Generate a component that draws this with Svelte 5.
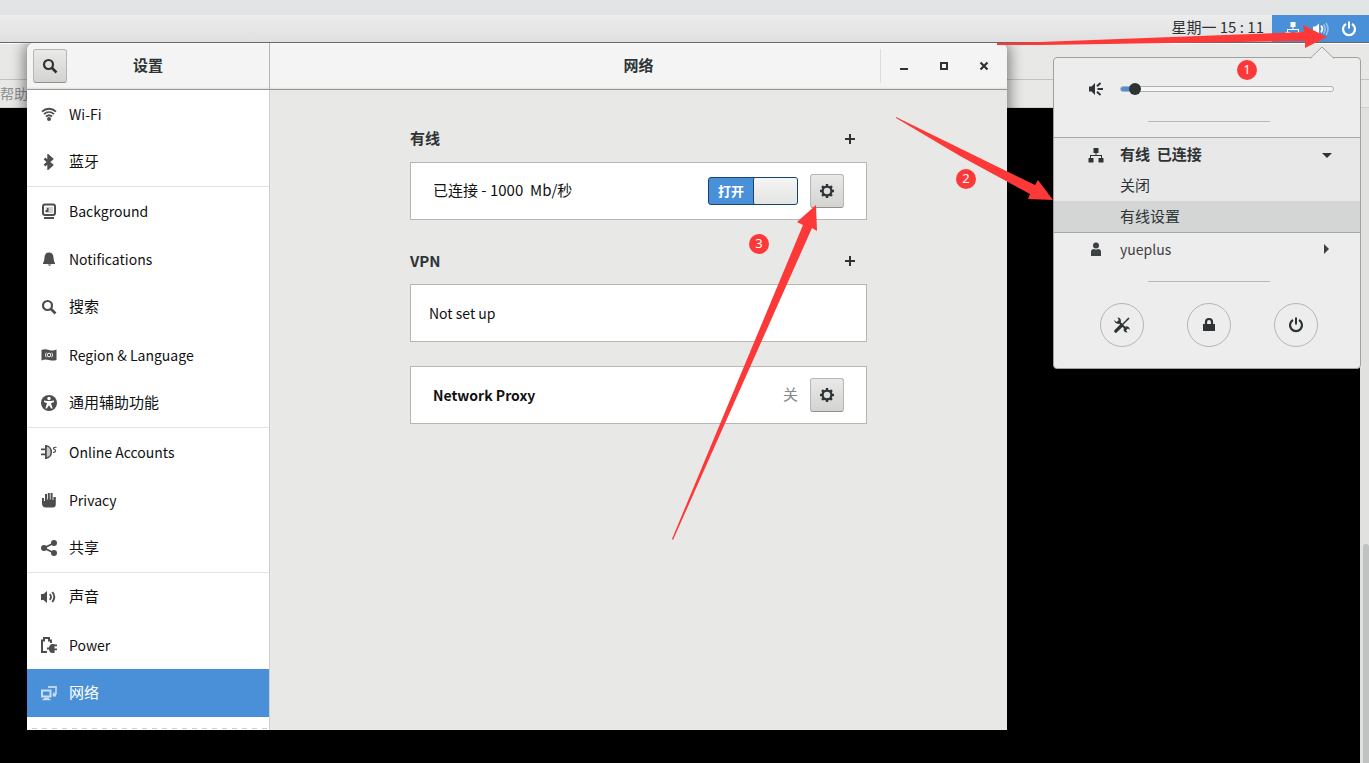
<script>
  const groups = [
    [
      { icon: 'wifi', label: 'Wi-Fi' },
      { icon: 'bluetooth', label: '蓝牙', zh: true }
    ],
    [
      { icon: 'background', label: 'Background' },
      { icon: 'bell', label: 'Notifications' },
      { icon: 'search', label: '搜索', zh: true },
      { icon: 'flag', label: 'Region & Language' },
      { icon: 'access', label: '通用辅助功能', zh: true }
    ],
    [
      { icon: 'online', label: 'Online Accounts' },
      { icon: 'hand', label: 'Privacy' },
      { icon: 'share', label: '共享', zh: true }
    ],
    [
      { icon: 'sound', label: '声音', zh: true },
      { icon: 'power', label: 'Power' },
      { icon: 'network', label: '网络', zh: true }
    ]
  ];

  let selected = $state('network');
  let wiredOn = $state(true);
  let volume = $state(4);

  const marks = [
    { n: 1, x: 1247, y: 70, arrow: '997,43 1040,42 1304,32 1303,25 1327,37 1305,48 1305,41 1040,45 997,45' },
    { n: 2, x: 966, y: 179, arrow: '896,117 1035,185 1038,180 1053,200 1028,199 1030,194 960,156 896,118' },
    { n: 3, x: 759, y: 244, arrow: '672,539 803,225 797,222 816,205 817,231 812,228 673,540' }
  ];
</script>

{#snippet icon(name)}
  <svg class="icon" viewBox="0 0 16 16" aria-hidden="true">
    {#if name === 'wifi'}
      <g fill="none" stroke="currentColor" stroke-width="1.8">
        <path d="M1 5.600C5 1.800 11 1.800 15 5.600" />
        <path d="M3 8.200C6 5.400 10 5.400 13 8.200" />
        <path d="M5 10.500C7 8.800 9 8.800 11 10.500" />
      </g>
      <circle cx="8" cy="13" r="2" fill="currentColor" />
    {:else if name === 'bluetooth'}
      <path d="M3.500 4.500 11 11 7.500 14.200V1.800L11 5 3.500 11.500" fill="none" stroke="currentColor" stroke-width="2.400" />
    {:else if name === 'background'}
      <rect x="2" y="1.500" width="12" height="10.500" rx="2" fill="none" stroke="currentColor" stroke-width="2" />
      <path d="M4.500 4h7.500v6H4.500z" fill="currentColor" opacity=".25" />
      <path d="M4.500 9V7h1.500V5h1.500v4z" fill="currentColor" />
      <path d="M3 14h10v2H3z" fill="currentColor" />
    {:else if name === 'bell'}
      <path d="M8 1.500c3.500 0 4.300 2.500 4.500 5 .2 3 .8 4.500 1.500 5.500v1H2v-1c.7-1 1.300-2.500 1.500-5.500.2-2.500 1-5 4.500-5zM6.500 13.500h4l-2 1.500z" fill="currentColor" />
    {:else if name === 'search'}
      <circle cx="6.500" cy="6.500" r="4.500" fill="none" stroke="currentColor" stroke-width="2.200" />
      <path d="m9.500 9.500 5 5" stroke="currentColor" stroke-width="2.600" />
    {:else if name === 'flag'}
      <path d="M.500 3Q4 1.600 8 3t7.500-.500v10.500q-3.500 1.200-7.500 0t-7.500.500z" fill="currentColor" />
      <circle cx="8" cy="8" r="1.800" fill="none" stroke="#fff" />
      <path d="M5.300 5.500Q3.300 8 5.300 10.500M10.700 5.500q2 2.500 0 5" fill="none" stroke="#fff" stroke-width=".8" />
    {:else if name === 'access'}
      <circle cx="8" cy="8" r="8" fill="currentColor" />
      <circle cx="8" cy="3.500" r="1.700" fill="#fff" />
      <path d="M3 5.500 6.500 6h3L13 5.500v1.500L10 8.300l1.700 5.200h-1.500L8 10.200 5.800 13.500H4.300L6 8.300 3 7z" fill="#fff" />
    {:else if name === 'online'}
      <path d="M0 4.500h4v1.800H0zM0 9.500h4v1.800H0zM4 1h1.800v14H4z" fill="currentColor" />
      <path d="M5 2c7 0 7 12 0 12" fill="currentColor" fill-opacity=".3" stroke="currentColor" stroke-width="1.600" />
      <path d="M15.500 3.500c-3-1-4 1.500-2 2s1 3.500-1.500 2.800" fill="none" stroke="currentColor" stroke-width="1.200" />
    {:else if name === 'hand'}
      <path d="M1 6h2v3h1V2h2v5.500h.8V1h2v6.500h.8V1h2v7h.8V5h2.400v7q0 3.500-3 3.500H5Q1 15.500 1 11.500z" fill="currentColor" />
    {:else if name === 'share'}
      <path d="M13 3 3 8l10 5" fill="none" stroke="currentColor" stroke-width="1.800" />
      <g fill="currentColor"><circle cx="13" cy="3" r="3" /><circle cx="3" cy="8" r="3" /><circle cx="13" cy="13" r="3" /></g>
    {:else if name === 'sound'}
      <path d="M0 5h2.500L6 2v12l-3.500-3H0z" fill="currentColor" />
      <path d="M8.800 5.200q2.400 2.800 0 5.600" fill="none" stroke="currentColor" stroke-width="1.800" />
      <path d="M11.300 3q4 5 0 10" fill="none" stroke="currentColor" stroke-width="1.900" />
    {:else if name === 'power'}
      <path d="M6 15H1V3.500h2V1h5v2.500h2V6" fill="none" stroke="currentColor" stroke-width="2" />
      <path d="M16 7.500v1.800h-2.500v2.200H16v1.800h-2.500V16h-2q-3 0-3.500-3.500H6v-2h2Q8.500 7 11.500 7h2v.500z" fill="currentColor" />
    {:else if name === 'network'}
      <path d="M7 2h8v6.500h-3" fill="none" stroke="currentColor" stroke-width="1.800" opacity=".85" />
      <path d="M11.500 9h3.500v2.500h-3z" fill="currentColor" />
      <path d="M1 5.500h8.500v6H1z" fill="none" stroke="currentColor" stroke-width="2" />
      <path d="M3 12.500h5V14h1.500v1.200H1.500V14H3z" fill="currentColor" />
    {:else if name === 'gear'}
      <circle cx="8" cy="8" r="4.400" fill="none" stroke="currentColor" stroke-width="2.300" />
      <g fill="currentColor">
        {#each [0, 45, 90, 135, 180, 225, 270, 315] as a}
          <path d="M6.800 1h2.400v3H6.800z" transform="rotate({a} 8 8)" />
        {/each}
      </g>
    {:else if name === 'plus'}
      <path d="M7 3h2v4h4v2H9v4H7V9H3V7h4z" fill="currentColor" />
    {:else if name === 'minimize'}
      <path d="M4 10h8v2H4z" fill="currentColor" />
    {:else if name === 'maximize'}
      <path d="M5 5h6v6H5z" fill="none" stroke="currentColor" stroke-width="2" />
    {:else if name === 'close'}
      <path d="m4.500 4.500 7 7m0-7-7 7" stroke="currentColor" stroke-width="2.200" />
    {:else if name === 'wired'}
      <path d="M5.500 1h5v5h-2v2H14v3h1.500v4.500h-5V11H13V9H3v2h2.500v4.500h-5V11H2V8h5.500V6h-2z" fill="currentColor" />
    {:else if name === 'speaker'}
      <path d="M0 5.500h2.500L6 2.500v11l-3.500-3H0z" fill="currentColor" />
      <path d="M8 4.700q2.800 3 0 6.600" fill="none" stroke="currentColor" stroke-width="1.900" />
      <path d="M10.700 3.500q3 4.500 0 9M13 2q4 6 0 12" fill="none" stroke="currentColor" stroke-width="1.500" opacity=".45" />
    {:else if name === 'volume'}
      <path d="M1 5.500h2.500L7 2v12l-3.500-3.500H1z" fill="currentColor" />
      <path d="M9 5.300 12.500 2M9.500 8H15M9 10.700l3.500 3.300" stroke="currentColor" stroke-width="1.900" />
    {:else if name === 'shutdown'}
      <path d="M5 3a6 6 0 1 0 6 0" fill="none" stroke="currentColor" stroke-width="2.200" />
      <path d="M7 .500h2v7H7z" fill="currentColor" />
    {:else if name === 'user'}
      <circle cx="8" cy="4.500" r="3" fill="currentColor" />
      <path d="M3 15v-4q0-3 3-3 2 1 4 0 3 0 3 3v4z" fill="currentColor" />
    {:else if name === 'lock'}
      <path d="M2 7h12v7H2z" fill="currentColor" />
      <path d="M5 8V5q0-3 3-3t3 3v3" fill="none" stroke="currentColor" stroke-width="2.200" />
    {:else if name === 'tools'}
      <path d="M13.500 2.500 8 8" stroke="currentColor" stroke-width="1.500" />
      <path d="M12.500 2.200 14.500.500l1 1-1.700 2z" fill="currentColor" />
      <path d="M7.500 8.500 1.800 14.200" stroke="currentColor" stroke-width="3.200" stroke-linecap="round" />
      <path d="m4 4 8.500 8.500" stroke="currentColor" stroke-width="2" />
      <path d="M3.500.500q3.500 0 3.500 4L4.500 7Q.500 6.500.200 3L2.500 5 5 3.500zM12 9.200q3.500.200 4 3.800l-2-1.500-2 1.500 1.500 2.500Q9.500 15.500 9.500 12z" fill="currentColor" />
    {:else if name === 'down'}
      <path d="M3 6h10L8 11z" fill="currentColor" />
    {:else if name === 'right'}
      <path d="M5 3 10 8l-5 5z" fill="currentColor" />
    {/if}
  </svg>
{/snippet}

<div class="desktop">
  <div class="strip"></div>
  <header class="panel">
    <time lang="zh">星期一 15 : 11</time>
    <button class="tray" aria-label="System menu">
      {@render icon('wired')}
      {@render icon('speaker')}
      {@render icon('shutdown')}
    </button>
  </header>

  <div class="stage">
    <div class="terminal">
      <div class="term-title"></div>
      <div class="term-menu">帮助</div>
      <div class="term-screen"><div class="term-scroll"></div></div>
    </div>

    <main class="window">
      <div class="head side-head">
        <button class="btn" aria-label="Search">{@render icon('search')}</button>
        <h1 lang="zh">设置</h1>
      </div>
      <div class="head main-head">
        <h1 lang="zh">网络</h1>
        <div class="controls">
          <button aria-label="Minimize">{@render icon('minimize')}</button>
          <button aria-label="Maximize">{@render icon('maximize')}</button>
          <button aria-label="Close">{@render icon('close')}</button>
        </div>
      </div>

      <nav>
        {#each groups as group}
          <div class="group">
            {#each group as item}
              <button class="item" class:selected={selected === item.icon} onclick={() => (selected = item.icon)}>
                {@render icon(item.icon)}<span lang={item.zh ? 'zh' : 'en'}>{item.label}</span>
              </button>
            {/each}
          </div>
        {/each}
        <div class="undershoot"></div>
      </nav>

      <section class="content">
        <div class="column">
          <div class="label"><h2 lang="zh">有线</h2><button aria-label="Add wired">{@render icon('plus')}</button></div>
          <div class="card">
            <span class="grow" id="wired-state" lang="zh">已连接 - 1000  Mb/秒</span>
            <label class="switch" class:off={!wiredOn}>
              <input type="checkbox" role="switch" aria-labelledby="wired-state" bind:checked={wiredOn} />
              <span class="on">{wiredOn ? '打开' : ''}</span><span class="knob"></span>
            </label>
            <button class="btn" aria-label="Wired options">{@render icon('gear')}</button>
          </div>
          <div class="label"><h2>VPN</h2><button aria-label="Add VPN">{@render icon('plus')}</button></div>
          <div class="card plain">Not set up</div>
          <div class="card proxy">
            <strong class="grow">Network Proxy</strong>
            <span class="dim" lang="zh">关</span>
            <button class="btn" aria-label="Proxy options">{@render icon('gear')}</button>
          </div>
        </div>
      </section>
    </main>
  </div>

  <aside class="menu">
    <svg class="pointer" viewBox="0 0 26 13" aria-hidden="true"><path d="M1 12.500 13 1l12 11.500" fill="#ededed" stroke="#a1a1a1" /></svg>
    <div class="volume">
      {@render icon('volume')}
      <input type="range" min="0" max="100" aria-label="Volume" style="--fill: {volume + 3}%" bind:value={volume} />
    </div>
    <div class="rule"></div>
    <div class="wired">
      <button class="row bold">{@render icon('wired')}<span lang="zh">有线  已连接</span>{@render icon('down')}</button>
      <button class="row"><span lang="zh">关闭</span></button>
      <button class="row active"><span lang="zh">有线设置</span></button>
    </div>
    <button class="row user">{@render icon('user')}<span>yueplus</span>{@render icon('right')}</button>
    <div class="rule"></div>
    <div class="actions">
      <button aria-label="Settings">{@render icon('tools')}</button>
      <button aria-label="Lock">{@render icon('lock')}</button>
      <button aria-label="Power off">{@render icon('shutdown')}</button>
    </div>
  </aside>

  <svg class="notes" viewBox="0 0 1369 763">
    {#each marks as m}
      <polygon points={m.arrow} />
      <circle cx={m.x} cy={m.y} r="10" />
      <text x={m.x} y={m.y + 4}>{m.n}</text>
    {/each}
  </svg>
</div>

<style>
  :global(body) {
    margin: 0;
    background: #000;
  }
  .desktop {
    position: relative;
    display: flex;
    flex-direction: column;
    min-height: 100vh;
    overflow: hidden;
    font: 14px/24px 'Noto Sans CJK SC', 'Noto Sans', sans-serif;
    color: #2e3436;
  }
  .desktop * {
    box-sizing: border-box;
  }
  button {
    display: flex;
    align-items: center;
    justify-content: center;
    padding: 0;
    border: 0;
    background: none;
    color: inherit;
    font: inherit;
    text-align: left;
  }
  h1,
  h2 {
    margin: 0;
    font-size: 15px;
    font-weight: 700;
  }
  [lang='zh'] {
    padding-bottom: 2px;
    font-size: 15px;
  }
  .icon {
    display: block;
    flex: none;
    width: 16px;
    height: 16px;
  }
  .strip {
    height: 15px;
    background: #e2e4e6;
  }
  .panel {
    position: relative;
    z-index: 1;
    display: flex;
    justify-content: flex-end;
    align-items: stretch;
    gap: 8px;
    height: 28px;
    border-bottom: 1px solid #65686a;
    background: linear-gradient(#ececec, #e0e0e0);
  }
  .tray {
    gap: 12px;
    width: 97px;
    background: #4a90d9;
    color: #fff;
  }
  .stage {
    position: relative;
    flex: 1;
    padding: 0 362px 33px 27px;
  }
  .terminal {
    position: absolute;
    inset: 0;
    display: flex;
    flex-direction: column;
  }
  .term-title {
    height: 37px;
    border-top: 1px solid #fff;
    border-bottom: 1px solid #c2c2c0;
    background: #e8e8e7;
  }
  .term-menu {
    height: 28px;
    border-bottom: 1px solid #d0d0ce;
    background: #e8e8e7;
    color: #8b8e8f;
    line-height: 26px;
  }
  .term-screen {
    flex: 1;
    padding-top: 436px;
    border-right: 9px solid #e1e1df;
    background: #000;
  }
  .term-scroll {
    position: relative;
    width: 6px;
    height: 100%;
    margin-left: auto;
    margin-right: -9px;
    border-radius: 3px 3px 0 0;
    background: #c0c2c2;
  }
  .window {
    position: relative;
    display: grid;
    grid-template-columns: 243px 1fr;
    grid-template-rows: 47px auto;
    border-radius: 7px 7px 0 0;
    overflow: hidden;
    background: #e8e8e7;
    box-shadow: 0 2px 14px 3px rgba(0, 0, 0, 0.45);
  }
  .head {
    position: relative;
    display: flex;
    align-items: center;
    justify-content: center;
    border-bottom: 1px solid #969693;
    background: linear-gradient(#fff 0, #f4f4f4 1px, #f4f4f4 44px, #dededd 46px);
  }
  .side-head {
    border-right: 1px solid #b5b5b2;
  }
  .side-head .btn {
    position: absolute;
    left: 6px;
  }
  .controls {
    position: absolute;
    right: 0;
    display: flex;
    padding: 0 3px;
    border-left: 1px solid #dcdcda;
  }
  .controls button {
    width: 40px;
    height: 34px;
  }
  .btn {
    flex: none;
    width: 34px;
    height: 34px;
    border: 1px solid #b6b6b3;
    border-bottom-color: #91918c;
    border-radius: 3px;
    background: linear-gradient(#e9e9e8, #d3d3d1);
  }
  nav {
    display: flex;
    flex-direction: column;
    border-right: 1px solid #cececc;
    background: #fff;
    color: #111;
  }
  .group + .group {
    border-top: 1px solid #e2e2e1;
  }
  .item {
    justify-content: flex-start;
    gap: 12px;
    width: 100%;
    height: 48px;
    padding: 0 14px;
  }
  .item .icon {
    color: #4d4d4d;
  }
  .item.selected {
    background: #4a90d9;
    color: #fff;
  }
  .item.selected .icon {
    color: #c9def4;
  }
  .undershoot {
    height: 13px;
    padding-top: 11px;
  }
  .undershoot::before {
    content: '';
    display: block;
    height: 1px;
    background: repeating-linear-gradient(90deg, #fff 0 5px, #cdcdcd 5px 10px);
  }
  .content {
    padding: 37px 24px;
  }
  .column {
    max-width: 457px;
    margin: 0 auto;
  }
  .label {
    display: flex;
    align-items: center;
    justify-content: space-between;
    height: 24px;
    margin-bottom: 11px;
    padding-right: 9px;
  }
  .card {
    display: flex;
    align-items: center;
    height: 58px;
    padding: 0 22px;
    border: 1px solid #b6b6b3;
    background: #fff;
    color: #111;
  }
  .card .btn {
    margin-left: 12px;
    color: #2e3436;
  }
  .card + .label {
    margin-top: 29px;
  }
  .card.plain {
    padding: 0 18px;
  }
  .card.proxy {
    margin-top: 24px;
  }
  .grow {
    flex: 1;
    white-space: pre;
  }
  .dim {
    color: #85888a;
  }
  .switch {
    position: relative;
    display: grid;
    grid-template-columns: 1fr 1fr;
    width: 90px;
    height: 28px;
    border: 1px solid #184472;
    border-radius: 3px;
    background: #4a90d9;
    color: #fff;
    font-size: 13px;
    font-weight: 700;
    line-height: 26px;
    text-align: center;
  }
  .switch.off {
    background: #c5c5c2;
  }
  .switch input {
    position: absolute;
    inset: 0;
    width: 100%;
    height: 100%;
    margin: 0;
    opacity: 0;
  }
  .knob {
    border-left: 1px solid #184472;
    border-radius: 2px;
    background: linear-gradient(#f5f5f5, #e4e4e3);
  }
  .off .knob {
    order: -1;
  }
  .menu {
    position: absolute;
    top: 57px;
    right: 8px;
    width: 308px;
    border: 1px solid #a1a1a1;
    border-radius: 4px;
    background: #ededed;
  }
  .pointer {
    position: absolute;
    top: -12px;
    right: 25px;
    width: 26px;
    height: 13px;
  }
  .volume {
    display: flex;
    align-items: center;
    gap: 16px;
    height: 62px;
    padding: 0 26px 0 34px;
  }
  .volume input {
    flex: 1;
    min-width: 0;
    height: 14px;
    margin: 0;
    appearance: none;
    background: none;
  }
  .volume input::-webkit-slider-runnable-track {
    height: 6px;
    border: 1px solid #b0b0ae;
    border-radius: 3px;
    background: linear-gradient(90deg, #4a90d9 var(--fill), #f6f6f6 var(--fill));
  }
  .volume input::-webkit-slider-thumb {
    appearance: none;
    width: 12px;
    height: 12px;
    margin-top: -4px;
    border-radius: 50%;
    background: #2e3436;
  }
  .rule {
    width: 122px;
    height: 1px;
    margin-left: 94px;
    background: #b8b8b8;
  }
  .volume + .rule {
    margin-top: 1px;
    margin-bottom: 15px;
  }
  .wired {
    padding-top: 1px;
    border-top: 1px solid #a8a8a8;
    border-bottom: 1px solid #a8a8a8;
    background: #e8e8e8;
  }
  .row {
    gap: 16px;
    width: 100%;
    height: 31px;
    padding: 0 25px 0 34px;
  }
  .row span {
    flex: 1;
    white-space: pre;
  }
  .row > span:first-child {
    padding-left: 32px;
  }
  .bold {
    font-weight: 700;
  }
  .active {
    background: #d4d6d5;
  }
  .row.user {
    height: 32px;
    color: #3c4143;
  }
  .user + .rule {
    margin-top: 16px;
  }
  .actions {
    display: flex;
    justify-content: space-between;
    padding: 21px 42px 21px 46px;
  }
  .actions button {
    width: 44px;
    height: 44px;
    border: 1px solid #b5b5b5;
    border-radius: 50%;
    color: #2e3436;
  }
  .notes {
    position: absolute;
    z-index: 2;
    top: 0;
    left: 0;
    width: 100%;
    pointer-events: none;
    fill: #fc3838;
  }
  .notes text {
    fill: #fff;
    font: 13px 'Noto Sans', sans-serif;
    text-anchor: middle;
  }
</style>
